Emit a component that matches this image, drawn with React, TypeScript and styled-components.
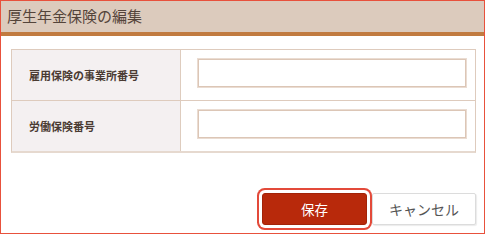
import React from "react";
import styled, { createGlobalStyle } from "styled-components";

const Global = createGlobalStyle`
  html, body { margin: 0; padding: 0; background: #fff; }
  body { font-family: "Noto Sans CJK JP", "Noto Sans", sans-serif; }
  * { box-sizing: border-box; }
`;

const Dialog = styled.div`
  width: 485px;
  height: 234px;
  border: 1px solid #e8513c;
  display: flex;
  flex-direction: column;
  background: #fff;
`;

const Header = styled.div`
  height: 35px;
  background: #dccbbd;
  border-bottom: 4px solid #c17b40;
  display: flex;
  align-items: center;
  padding: 0 0 2px 6px;
  font-size: 15px;
  color: #54443a;
  letter-spacing: 0px;
`;

const Body = styled.div`
  padding: 13px 8px 0 10px;
  display: flex;
  flex-direction: column;
`;

const Table = styled.div`
  display: grid;
  grid-template-columns: 169px 1fr;
  border: 1px solid #decbbd;
  border-bottom-width: 2px;
  border-bottom-color: #e6d9cf;
`;

const Label = styled.div<{ $last?: boolean }>`
  height: ${(p) => (p.$last ? 50 : 51)}px;
  background: #f4f0f1;
  border-right: 1px solid #deccbe;
  border-bottom: ${(p) => (p.$last ? "none" : "1px solid #decbbd")};
  display: flex;
  align-items: center;
  padding-left: 17px;
  font-size: 11px;
  font-weight: bold;
  color: #4a3b33;
`;

const Cell = styled.div<{ $last?: boolean }>`
  height: ${(p) => (p.$last ? 50 : 51)}px;
  border-bottom: ${(p) => (p.$last ? "none" : "1px solid #decbbd")};
  padding: 8px 8px 0 16px;
`;

const Input = styled.input`
  display: block;
  width: 270px;
  height: 30px;
  border: 2px solid #eadcd2;
  outline: 1px solid #dcc6b6;
  outline-offset: -2px;
  background: #fff;
  margin: 0;
`;

const Actions = styled.div`
  display: flex;
  justify-content: flex-end;
  gap: 5px;
  margin-top: 40px;
`;

const SaveButton = styled.button`
  position: relative;
  z-index: 1;
  width: 105px;
  height: 32px;
  background: #b8290b;
  color: #fff;
  border: 1px solid #a22308;
  border-radius: 3px;
  box-shadow: 0 0 0 3px #fff, 0 0 0 5px #e34a3a;
  font-family: inherit;
  font-size: 13.5px;
  cursor: pointer;
`;

const CancelButton = styled.button`
  width: 104px;
  height: 32px;
  background: #fff;
  color: #555;
  border: 1px solid #dcdcdc;
  border-radius: 2px;
  box-shadow: 1px 1px 1px rgba(0, 0, 0, 0.08);
  font-family: inherit;
  font-size: 14px;
  cursor: pointer;
`;

export default function App() {
  return (
    <>
      <Global />
      <Dialog>
        <Header>厚生年金保険の編集</Header>
        <Body>
          <Table>
            <Label>雇用保険の事業所番号</Label>
            <Cell>
              <Input />
            </Cell>
            <Label $last>労働保険番号</Label>
            <Cell $last>
              <Input />
            </Cell>
          </Table>
          <Actions>
            <SaveButton>保存</SaveButton>
            <CancelButton>キャンセル</CancelButton>
          </Actions>
        </Body>
      </Dialog>
    </>
  );
}
